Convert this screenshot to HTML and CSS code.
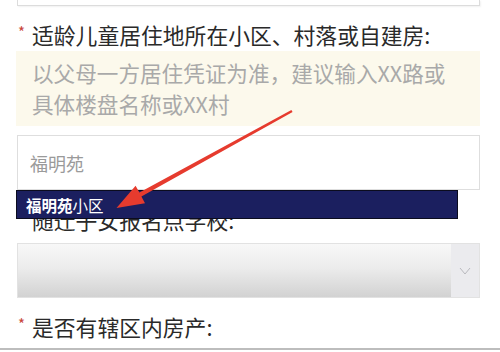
FILE: index.html
```html
<!DOCTYPE html>
<html lang="zh-CN">
<head>
<meta charset="utf-8">
<title>表单</title>
<link rel="stylesheet" href="styles.css">
</head>
<body>
<div class="page">
  <div class="topbox"></div>

  <div class="field">
    <div class="label"><span class="req">*</span>适龄儿童居住地所在小区、村落或自建房:</div>
    <div class="hint">以父母一方居住凭证为准，建议输入XX路或<br>具体楼盘名称或XX村</div>
    <div class="input-wrap">
      <div class="input">福明苑</div>
      <ul class="suggest"><li><b>福明苑</b>小区</li></ul>
    </div>
  </div>

  <div class="field">
    <div class="label label-mid"><span class="req">*</span>随迁子女报名点学校:</div>
    <div class="select">
      <div class="select-body"></div>
      <div class="select-btn">
        <svg width="12" height="8" viewBox="0 0 12 8"><path d="M1 1 L6 7 L11 1" fill="none" stroke="#b9b9be" stroke-width="1"/></svg>
      </div>
    </div>
  </div>

  <div class="field">
    <div class="label label-last"><span class="req">*</span>是否有辖区内房产:</div>
  </div>

  <div class="rule"></div>

  <svg class="annot" width="500" height="352" viewBox="0 0 500 352">
    <polygon fill="#e63b2e" points="291.4,110.1 139.4,192.6 135.6,185.8 116.5,208 145,203.2 141.4,196.4 292.6,111.9"/>
  </svg>
</div>
</body>
</html>
```

FILE: styles.css
```css
html, body {
  margin: 0;
  padding: 0;
  background: #fff;
}

.page {
  position: relative;
  width: 500px;
  height: 352px;
  overflow: hidden;
  box-sizing: border-box;
  padding: 0 20px 0 17px;
  background: #fff;
  font-family: "Noto Sans CJK SC", "Noto Sans", sans-serif;
}

.topbox {
  height: 6px;
  box-sizing: border-box;
  border: 1px solid #dcdcdc;
  border-top: none;
  background: #fff;
  box-shadow: 1px 1px 2px rgba(0, 0, 0, 0.06);
}

.label {
  display: flex;
  margin-top: 14px;
  font-size: 21.8px;
  line-height: 30px;
  color: #2a2a2a;
  white-space: nowrap;
}

.label-mid {
  margin-top: 15px;
}

.req {
  width: 15px;
  flex: none;
  color: #c8453a;
  font-size: 15px;
  line-height: 24px;
  padding-left: 1px;
  box-sizing: border-box;
}

.hint {
  margin-top: 1px;
  margin-left: -1px;
  padding: 6px 0 7px 16px;
  background: #fcf9ec;
  color: #a9a9a9;
  font-size: 21.6px;
  line-height: 31px;
  white-space: nowrap;
}

.input-wrap {
  position: relative;
  margin-top: 9px;
}

.input {
  display: flex;
  align-items: center;
  height: 55px;
  box-sizing: border-box;
  padding-left: 12px;
  border: 1px solid #dedede;
  background: #fff;
  font-size: 18px;
  color: #9a9a9a;
}

.suggest {
  position: absolute;
  left: -1px;
  top: 55px;
  z-index: 2;
  width: 442px;
  height: 29px;
  box-sizing: border-box;
  margin: 0;
  padding: 0 0 0 9px;
  list-style: none;
  display: flex;
  align-items: center;
  background: #1b1f5f;
  border: 1px solid #0b0c1e;
  color: #fff;
  font-size: 15.5px;
}

.suggest b {
  font-weight: 700;
}

.select {
  display: flex;
  height: 55px;
  margin-top: 8px;
  box-sizing: border-box;
  border: 1px solid #e2e2e2;
}

.select-body {
  flex: 1;
  background: linear-gradient(#f8f8f8, #ececec 45%, #d2d2d2);
}

.select-btn {
  width: 28px;
  display: flex;
  align-items: center;
  justify-content: center;
  background: #ebebee;
}

.label-last {
  margin-top: 14px;
}

.rule {
  height: 2px;
  margin: 6px -20px 0 -17px;
  background: #bdbdbd;
}

.annot {
  position: absolute;
  left: 0;
  top: 0;
  z-index: 3;
  pointer-events: none;
}
```
